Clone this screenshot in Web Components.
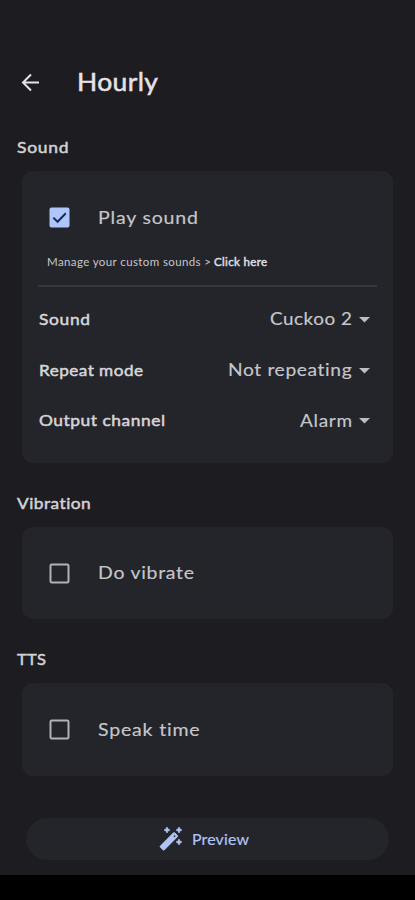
<!DOCTYPE html>
<html lang="en"><head><meta charset="utf-8"><title>Hourly</title>
<style>
html{background:#1d1c20}
body{margin:0;background:#1d1c20;color:#d0cfd4;font-family:Lato,"Open Sans",sans-serif}
</style></head><body>
<hourly-screen></hourly-screen>
<script>
const define=(name,html,ready)=>customElements.define(name,class extends HTMLElement{
  connectedCallback(){
    if(this.shadowRoot)return;
    const t=document.createElement('template');t.innerHTML=html;
    this.attachShadow({mode:'open'}).append(t.content.cloneNode(true));
    if(ready)ready.call(this,this.shadowRoot);
  }
});

// A single line of text that takes the width given in "fit": partly by wider
// letters, partly by tracking.
define('fit-text',`<style>:host{display:block;white-space:nowrap;flex:none}span{display:inline-block;transform-origin:0 50%}</style><span></span>`,function(root){
  const s=root.querySelector('span'),text=this.getAttribute('text');
  s.textContent=text;
  const fit=+this.getAttribute('fit'),natural=s.getBoundingClientRect().width;
  const scale=Math.pow(fit/natural,.6);
  const gap=(fit/scale-natural)/(text.length-1);
  s.style.letterSpacing=gap+'px';
  s.style.transform=`scaleX(${scale})`;
  this.style.width=fit+'px';
});

define('top-bar',`<style>
:host{display:flex;align-items:center;height:40px;padding:62px 0 0 20px;color:#e5e3e8}
svg{width:20px;height:20px;flex:none;margin-right:37px}
fit-text{font-size:25.5px;line-height:40px;-webkit-text-stroke:.5px;margin-top:-3px}
</style><svg viewBox="0 0 20 20" fill="none" stroke="currentColor" stroke-width="2"><path d="M19 10.500H3.400M11 2.500l-8 8 8 8"/></svg><fit-text text="Hourly" fit="81"></fit-text>`);

define('setting-section',`<style>
:host{display:block}
fit-text{margin-left:17px;font-size:16px;line-height:20px;-webkit-text-stroke:.5px;color:#d2d1d5}
.card{box-sizing:border-box;margin:14px 22px 0;height:var(--card-height,92.5px);border-radius:11px;background:#24252a;overflow:hidden}
</style><div class="label"></div><div class="card"><slot></slot></div>`,function(root){
  root.querySelector('.label').innerHTML=`<fit-text text="${this.getAttribute('label')}" fit="${this.getAttribute('fit')}"></fit-text>`;
});

define('check-row',`<style>
:host{display:flex;align-items:center;height:93px;padding-left:27px;color:#c6c6cb}
svg{width:21px;height:21px;flex:none;margin-right:28px}
fit-text{font-size:17.5px;line-height:24px;-webkit-text-stroke:.15px}
</style><div class="content" style="display:contents"></div>`,function(root){
  const box=this.hasAttribute('checked')
    ?'<rect x=".5" y=".5" width="20" height="20" rx="2" fill="#afc6fb"/><path d="M4.3 10.6l4.3 4.2 8.2-8.6" fill="none" stroke="#182e59" stroke-width="2"/>'
    :'<rect x="1.5" y="1.5" width="18" height="18" rx="1.3" fill="none" stroke="#b1b1b8" stroke-width="2"/>';
  root.querySelector('.content').innerHTML=`<svg viewBox="0 0 21 21">${box}</svg><fit-text text="${this.getAttribute('label')}" fit="${this.getAttribute('fit')}"></fit-text>`;
});

define('sound-note',`<style>
:host{display:flex;height:30px;margin:-9px 16px 0;padding:0 0 0 9px;border-bottom:2px solid #36373c;color:#c6c6cb;font-size:10.5px;line-height:14px;gap:3px}
.link{-webkit-text-stroke:.45px;color:#dddde2}
</style><fit-text text="Manage your custom sounds &gt;" fit="164"></fit-text><fit-text class="link" text="Click here" fit="53"></fit-text>`);

define('select-row',`<style>
:host{display:flex;align-items:center;height:50.7px;padding:0 23px 0 17px}
.label{font-size:16px;line-height:24px;-webkit-text-stroke:.5px;color:#d5d5da;margin-top:-2px}
.value{margin-left:auto;font-size:17.5px;line-height:24px;color:#c6c6cb;-webkit-text-stroke:.15px;margin-top:-1px}
svg{width:11px;height:6px;margin-left:7px}
</style><div class="content" style="display:contents"></div>`,function(root){
  const a=n=>this.getAttribute(n);
  root.querySelector('.content').innerHTML=`<fit-text class="label" text="${a('label')}" fit="${a('fit')}"></fit-text><fit-text class="value" text="${a('value')}" fit="${a('value-fit')}"></fit-text><svg viewBox="0 0 11 6"><path d="M0 0h11L5.5 5.5z" fill="#bdbdc3"/></svg>`;
});

define('preview-button',`<style>
:host{display:flex;align-items:center;height:42px;margin:0 26px;padding-left:133px;box-sizing:border-box;border-radius:21px;background:#24252a;color:#b0c3f5;gap:9px}
svg{width:24px;height:24px;flex:none}
fit-text{font-size:15.5px;line-height:20px;-webkit-text-stroke:.2px}
</style><svg viewBox="0 0 24 24" fill="currentColor"><path d="M8 0l1 2 2 1-2 1-1 2-1-2-2-1 2-1zM20 0l1 2 2 1-2 1-1 2-1-2-2-1 2-1zM20 12l1 2 2 1-2 1-1 2-1-2-2-1 2-1z" stroke="currentColor" stroke-width=".7"/><path fill-rule="evenodd" stroke="currentColor" stroke-width=".8" d="M14.300 5.900q.8-.8 1.600 0l2.400 2.400q.8.8 0 1.600L5.500 22.800q-.8.8-1.600 0l-2.400-2.400q-.8-.8 0-1.600zM15.400 7.800l-1.300 1.300 1.500 1.500 1.300-1.300z"/></svg><fit-text text="Preview" fit="57"></fit-text>`);

define('hourly-screen',`<style>
:host{display:flex;flex-direction:column;width:415px;height:900px;overflow:hidden}
.sections{display:flex;flex-direction:column;gap:30px;padding-top:35px}
.first{--card-height:291.700px}
.selects{padding-top:7.500px}
preview-button{margin-top:42.400px}
.nav{margin-top:auto;height:25px;background:#000}
</style><top-bar></top-bar>
<div class="sections">
<setting-section class="first" label="Sound" fit="51.500">
<check-row checked label="Play sound" fit="100"></check-row>
<sound-note></sound-note>
<div class="selects">
<select-row label="Sound" fit="51" value="Cuckoo 2" value-fit="82"></select-row>
<select-row label="Repeat mode" fit="104" value="Not repeating" value-fit="124"></select-row>
<select-row label="Output channel" fit="126" value="Alarm" value-fit="52"></select-row>
</div></setting-section>
<setting-section label="Vibration" fit="74"><check-row label="Do vibrate" fit="96"></check-row></setting-section>
<setting-section label="TTS" fit="29"><check-row label="Speak time" fit="102"></check-row></setting-section>
</div>
<preview-button></preview-button><div class="nav"></div>`);
</script></body></html>
